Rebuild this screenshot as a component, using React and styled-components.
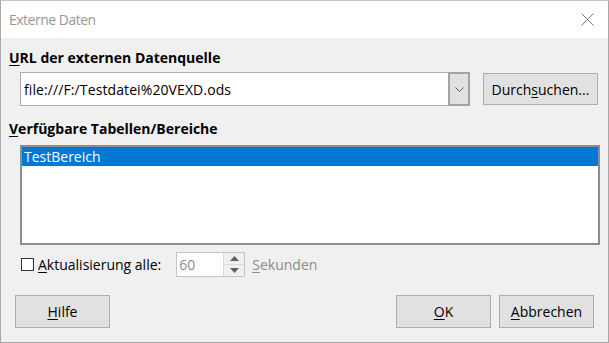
import React from "react";
import styled, { createGlobalStyle } from "styled-components";

const Global = createGlobalStyle`
  html, body { margin: 0; padding: 0; background: #ffffff; }
  body { font-family: "Open Sans", "Noto Sans", sans-serif; }
`;

const Window = styled.div`
  width: 609px;
  height: 343px;
  box-sizing: border-box;
  border: 1px solid #a9a9a9;
  border-top-color: #c8c8c8;
  display: flex;
  flex-direction: column;
  background: #f0f0f0;
  overflow: hidden;
`;

const TitleBar = styled.div`
  height: 37px;
  flex: none;
  background: #ffffff;
  display: flex;
  align-items: center;
  justify-content: space-between;
  padding: 0 14px 0 8px;
`;

const Title = styled.span`
  font-size: 14px;
  letter-spacing: -0.5px;
  color: #999999;
`;

const Body = styled.div`
  flex: 1;
  display: flex;
  flex-direction: column;
  padding: 8px 8px 0 8px;
  color: #000;
  font-size: 14px;
`;

const SectionLabel = styled.div`
  font-weight: 700;
  font-size: 14px;
  line-height: 20px;
  margin-top: ${(p) => p.$top || 0}px;
`;

const U = styled.span`
  text-decoration: underline;
  text-underline-offset: 2px;
`;

const Row = styled.div`
  display: flex;
  align-items: center;
  gap: 13px;
  margin-top: 4px;
  padding-left: 11px;
`;

const Combo = styled.div`
  width: 450px;
  height: 34px;
  display: flex;
  box-sizing: border-box;
`;

const ComboInput = styled.div`
  flex: 1;
  background: #fff;
  border: 1px solid #adadad;
  border-right: none;
  display: flex;
  align-items: center;
  padding-left: 3px;
  font-size: 14px;
  letter-spacing: 0.1px;
`;

const ComboButton = styled.div`
  width: 22px;
  box-sizing: border-box;
  background: #e1e1e1;
  border: 2px solid #a3a3a3;
  display: flex;
  align-items: center;
  justify-content: center;
`;

const Button = styled.div`
  width: ${(p) => p.$w}px;
  height: ${(p) => p.$h || 33}px;
  box-sizing: border-box;
  background: #e1e1e1;
  border: 1px solid #adadad;
  display: flex;
  align-items: center;
  justify-content: center;
  font-size: 14px;
  color: #000;
`;

const ListBox = styled.div`
  margin: 6px 0 0 11px;
  width: 580px;
  height: 100px;
  box-sizing: border-box;
  border: 2px solid #8a8d91;
  background: #fff;
`;

const ListItem = styled.div`
  height: 19px;
  display: flex;
  align-items: center;
  padding-left: 2px;
  font-size: 14px;
  background: ${(p) => (p.$selected ? "#0078d7" : "transparent")};
  color: ${(p) => (p.$selected ? "#fff" : "#000")};
`;

const CheckRow = styled.div`
  display: flex;
  align-items: center;
  margin-top: 7px;
  padding-left: 12px;
  height: 25px;
`;

const CheckBox = styled.div`
  width: 13px;
  height: 13px;
  box-sizing: border-box;
  border: 1px solid #333;
  background: #fff;
  margin-right: 4px;
`;

const CheckLabel = styled.span`
  font-size: 14px;
  margin-right: 15px;
`;

const Spin = styled.div`
  width: 69px;
  height: 25px;
  box-sizing: border-box;
  border: 1px solid #c4c4c4;
  background: #fff;
  display: flex;
`;

const SpinValue = styled.div`
  flex: 1;
  display: flex;
  align-items: center;
  padding-left: 2px;
  color: #8c8c8c;
  font-size: 14px;
`;

const SpinButtons = styled.div`
  width: 20px;
  display: flex;
  flex-direction: column;
  border-left: 1px solid #dadada;
`;

const SpinBtn = styled.div`
  flex: 1;
  background: #f0f0f0;
  display: flex;
  align-items: center;
  justify-content: center;
  & + & { border-top: 1px solid #dadada; }
`;

const Muted = styled.span`
  color: #8c8c8c;
  margin-left: 7px;
  font-size: 14px;
`;

const Footer = styled.div`
  display: flex;
  align-items: center;
  margin-top: 18px;
  padding-left: 6px;
  padding-right: 6px;
  gap: 8px;
`;

const Spacer = styled.div`
  flex: 1;
`;

export default function App() {
  return (
    <>
      <Global />
      <Window>
        <TitleBar>
          <Title>Externe Daten</Title>
          <svg width="13" height="13" viewBox="0 0 13 13">
            <path d="M0.5 0.5 L12.5 12.5 M12.5 0.5 L0.5 12.5" stroke="#777" strokeWidth="1" fill="none" />
          </svg>
        </TitleBar>
        <Body>
          <SectionLabel $top={2}>
            <U>U</U>RL der externen Datenquelle
          </SectionLabel>
          <Row>
            <Combo>
              <ComboInput>file:///F:/Testdatei%20VEXD.ods</ComboInput>
              <ComboButton>
                <svg width="9" height="5" viewBox="0 0 9 5">
                  <path d="M0.5 0.5 L4.5 4.5 L8.5 0.5" stroke="#555" strokeWidth="1" fill="none" />
                </svg>
              </ComboButton>
            </Combo>
            <Button $w={115} $h={32}>
              Durch<U>s</U>uchen...
            </Button>
          </Row>
          <SectionLabel $top={13}>
            <U>V</U>erfügbare Tabellen/Bereiche
          </SectionLabel>
          <ListBox>
            <ListItem $selected>TestBereich</ListItem>
          </ListBox>
          <CheckRow>
            <CheckBox />
            <CheckLabel>
              <U>A</U>ktualisierung alle:
            </CheckLabel>
            <Spin>
              <SpinValue>60</SpinValue>
              <SpinButtons>
                <SpinBtn>
                  <svg width="9" height="5" viewBox="0 0 9 5"><path d="M0 5 L4.5 0 L9 5 Z" fill="#606060" /></svg>
                </SpinBtn>
                <SpinBtn>
                  <svg width="9" height="5" viewBox="0 0 9 5"><path d="M0 0 L4.5 5 L9 0 Z" fill="#606060" /></svg>
                </SpinBtn>
              </SpinButtons>
            </Spin>
            <Muted>
              <U>S</U>ekunden
            </Muted>
          </CheckRow>
          <Footer>
            <Button $w={95}>
              <U>H</U>ilfe
            </Button>
            <Spacer />
            <Button $w={95}>
              <U>O</U>K
            </Button>
            <Button $w={95}>
              <U>A</U>bbrechen
            </Button>
          </Footer>
        </Body>
      </Window>
    </>
  );
}
